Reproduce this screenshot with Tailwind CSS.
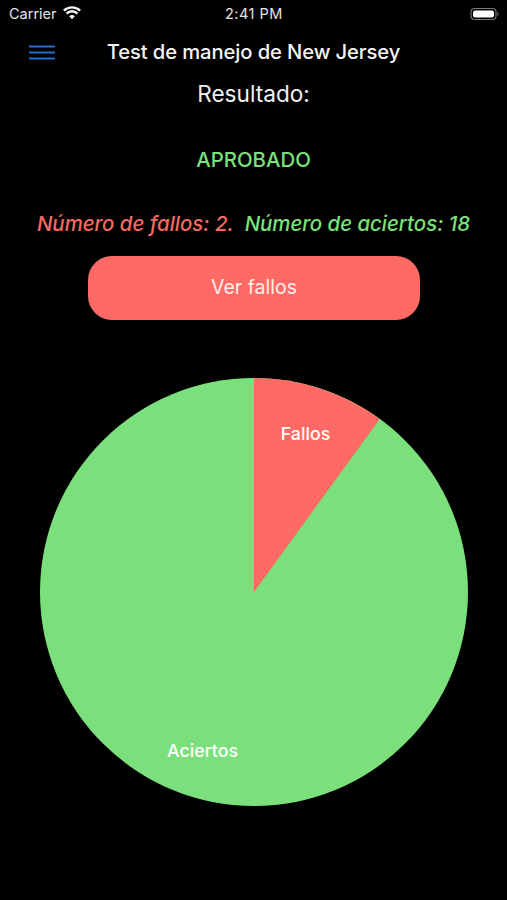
<!DOCTYPE html>
<html lang="es">
<head>
<meta charset="utf-8">
<script src="https://cdn.jsdelivr.net/npm/@tailwindcss/browser@4"></script>
</head>
<body class="bg-black">
<div class="w-[507px] h-[900px] overflow-hidden bg-black text-white font-['Inter',sans-serif] flex flex-col">
  <!-- status bar -->
  <div class="relative h-[28px] shrink-0 flex items-center justify-between pl-[9px] pr-[7px] text-[14.5px] text-[#e4e4e4]">
    <div class="flex items-center gap-[6px]">
      <span>Carrier</span>
      <svg width="18" height="14" viewBox="0 0 20 15" class="-mt-[3px]"><path d="M10 14.5 L6.9 11.2 A4.5 4.5 0 0 1 13.1 11.2 Z M4.9 9.1 L3 7.1 A10 10 0 0 1 17 7.1 L15.1 9.1 A7.3 7.3 0 0 0 4.9 9.1 Z M1.8 5.9 L0 4 A14.2 14.2 0 0 1 20 4 L18.2 5.9 A11.6 11.6 0 0 0 1.8 5.9 Z" fill="#f2f2f2"/></svg>
    </div>
    <span class="absolute left-[225px] top-[5px] leading-[18px] tracking-[0.5px]">2:41 PM</span>
    <svg width="30" height="14" viewBox="0 0 30 14"><rect x="1" y="1.5" width="25" height="11" rx="3.5" fill="none" stroke="#777" stroke-width="1.2"/><rect x="3" y="3.5" width="21" height="7" rx="2" fill="#fff"/><path d="M27.5 5 a2.4 2.4 0 0 1 0 4 z" fill="#777"/></svg>
  </div>
  <!-- nav -->
  <div class="relative h-[48px] shrink-0 flex items-center justify-center">
    <svg width="28" height="16" viewBox="0 0 28 16" class="absolute left-[28px] top-[17px]"><path d="M1 1.5H27M1 7.5H27M1 13.5H27" stroke="#1a6fd0" stroke-width="1.8" fill="none"/></svg>
    <span class="text-[20.2px] font-medium leading-[26px] tracking-[-0.1px] text-[#f5f5f5]">Test de manejo de New Jersey</span>
  </div>
  <!-- content -->
  <div class="h-[36px] shrink-0 flex items-center justify-center text-[22.6px] text-[#f0f0f0]">Resultado:</div>
  <div class="h-[30px] mt-[33px] shrink-0 flex items-center justify-center text-[20.4px] font-medium text-[#7be07c]">APROBADO</div>
  <div class="h-[30px] mt-[34px] shrink-0 flex items-center justify-center gap-[11px] text-[20.4px] font-medium italic">
    <span class="text-[#f76a64]">Número de fallos: 2.</span>
    <span class="text-[#7be07c]">Número de aciertos: 18</span>
  </div>
  <div class="mt-[17px] ml-[88px] w-[332px] h-[64px] shrink-0 rounded-[24px] bg-[#ff6a64] flex items-center justify-center text-[19.5px] text-[#fff0ee]">Ver fallos</div>
  <!-- chart -->
  <svg width="507" height="450" viewBox="0 0 507 450" class="mt-[56px] shrink-0">
    <circle cx="254" cy="216" r="214" fill="#7be07c"/>
    <path d="M254 216 L254 2 A214 214 0 0 1 379.8 42.9 Z" fill="#ff6a64"/>
    <text x="305.5" y="64" text-anchor="middle" font-size="17.8" font-weight="500" fill="#fff">Fallos</text>
    <text x="202.5" y="381" text-anchor="middle" font-size="17.8" font-weight="500" fill="#fff">Aciertos</text>
  </svg>
</div>
</body>
</html>
